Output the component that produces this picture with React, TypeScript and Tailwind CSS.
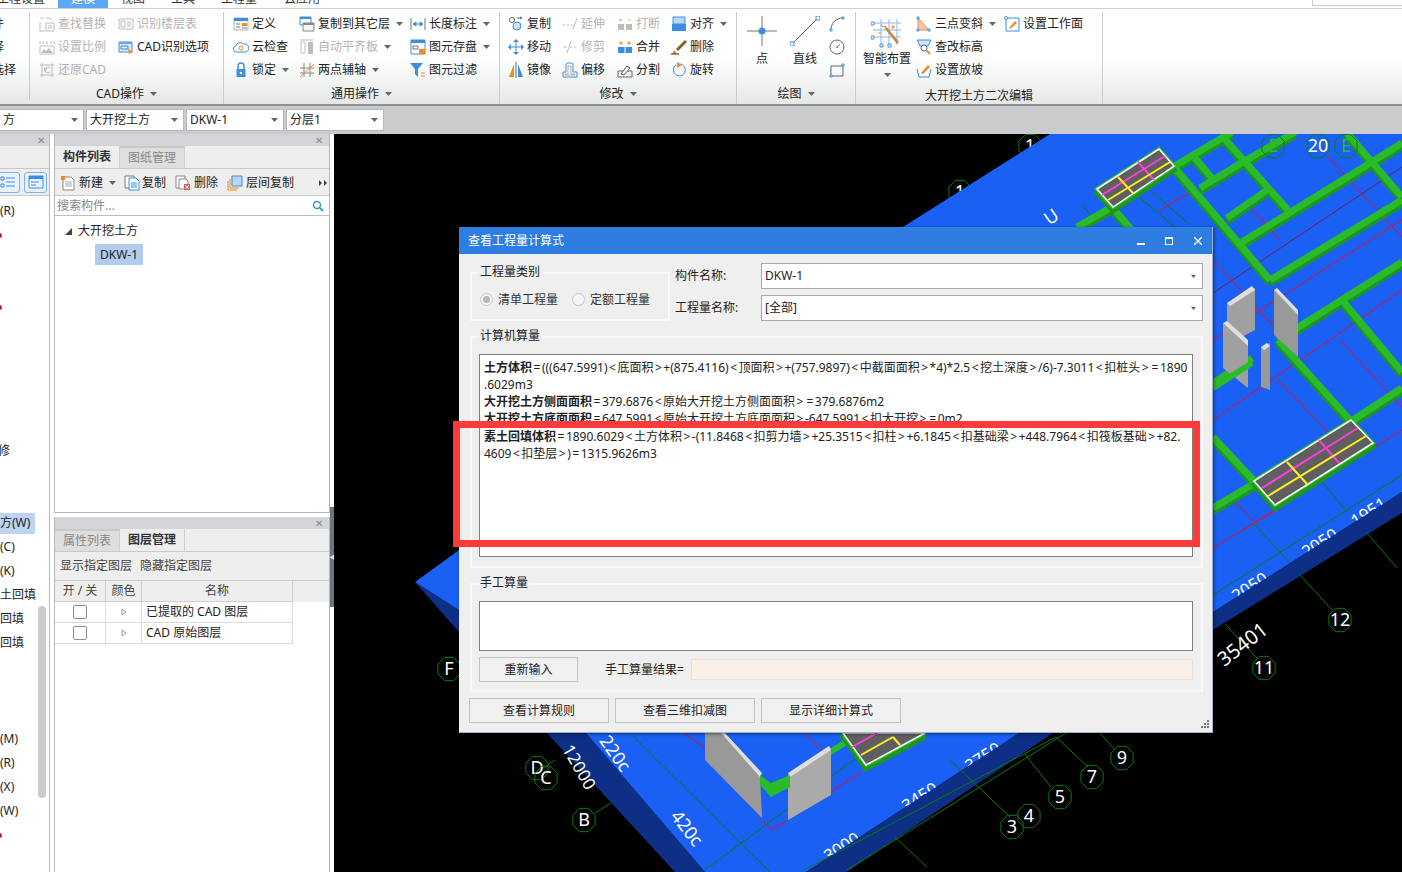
import type { ReactNode } from "react";

const BLUE = "#3d8ee0";
const ORANGE = "#f08a24";
const DIS = "#bdbdbd";

function Ico({ children }: { children: ReactNode }) {
  return (
    <svg viewBox="0 0 16 16" className="h-4 w-4 shrink-0" fill="none" strokeWidth="1">
      {children}
    </svg>
  );
}

const icons: Record<string, ReactNode> = {
  find: <Ico><path d="M1 2h4M7 2h3l3 2M7 7h8v8H7zM9 10h4M9 12h4M1 6v9h5" stroke={DIS} /></Ico>,
  floor: <Ico><path d="M1 3h14v10H1z" stroke={DIS} /><path d="M3 5h4v6H3zM9 6h4M9 8h4M9 10h4" stroke={DIS} /></Ico>,
  scale: <Ico><path d="M1 2v3M4 2v3M8 2v3M12 2v3M15 2v3M1 7h14v8H1z" stroke={DIS} /><path d="M2 14l3-4 2 2 3-3 4 5z" fill={DIS} /></Ico>,
  cadopt: <Ico><path d="M1 3h13v10H1z" fill="#dce9f8" stroke={BLUE} /><path d="M1 3h13v2H1z" fill="#6aa7e8" /><path d="M3 7h7v3H3z" stroke={BLUE} /><path d="M10 9l5 5-3 0-1 2z" fill={ORANGE} /></Ico>,
  restore: <Ico><path d="M3 1v14M1 3h14M13 1v14M1 13h14" stroke={DIS} /><path d="M11 6a3 3 0 1 0 0 4M5 6l3 1-2 2z" stroke={DIS} /></Ico>,
  define: <Ico><path d="M1 2h14v12H1z" fill="#f6f6f6" stroke="#b5b5b5" /><path d="M1 2h14v3H1z" fill={BLUE} /><path d="M9 7h5v3H9z" fill={ORANGE} /><path d="M3 8h4M3 11h4M9 12h5" stroke="#888" /></Ico>,
  copyfloor: <Ico><path d="M1 1h11v8H1z" fill="#fff" stroke={BLUE} /><path d="M1 1h11v2H1z" fill={BLUE} /><path d="M4 7h11v8H4z" fill="#f4f4f4" stroke="#888" /><path d="M4 7h11v2H4z" fill="#888" /></Ico>,
  measure: <Ico><path d="M1 2v12M15 2v12" stroke="#777" /><path d="M3 8h10M3 8l3-2v4zM13 8l-3-2v4z" stroke={BLUE} fill={BLUE} /></Ico>,
  cloud: <Ico><path d="M4 13a3 3 0 0 1-1-6 4 4 0 0 1 7-2 3.500 3.500 0 0 1 3 8z" fill="#fff" stroke={BLUE} /><circle cx="8" cy="9" r="2" stroke={ORANGE} /></Ico>,
  level: <Ico><path d="M1 1h14" stroke={DIS} /><path d="M2 3h4v11H2z" stroke={DIS} /><path d="M9 3h5v12H9z" fill={DIS} /></Ico>,
  save: <Ico><path d="M1 1h14v14H1z" fill="#fff" stroke={BLUE} /><path d="M1 1h14v3H1z" fill={BLUE} /><path d="M3 7h5v3H3z" stroke="#777" /><path d="M9 10h6v5H9z" fill={ORANGE} /></Ico>,
  lock: <Ico><path d="M5 7V4a3 3 0 0 1 6 0v3" stroke={BLUE} strokeWidth="1.500" /><path d="M3.500 7h9v8h-9z" fill={BLUE} /><circle cx="8" cy="11" r="1.300" fill="#fff" /></Ico>,
  axis: <Ico><path d="M5 1v14M11 1v14M1 6h14M1 11h14" stroke="#888" /><path d="M1 15L15 2" stroke={ORANGE} /></Ico>,
  filter: <Ico><path d="M0 1h13L8 7v8L5 12V7z" fill={BLUE} /><path d="M11 11h4M11 14h4" stroke={ORANGE} /></Ico>,
  copy: <Ico><circle cx="4" cy="4" r="2.500" stroke="#666" /><circle cx="9" cy="10" r="4" fill="#cfe3f8" stroke={BLUE} /><path d="M9 2h5l-2-1M14 2l-2 1" stroke="#666" /></Ico>,
  extend: <Ico><path d="M1 9h2M5 9h2M9 9h2M11 13l4-11" stroke={DIS} /></Ico>,
  move: <Ico><path d="M8 3v10M3 8h10" stroke={BLUE} /><path d="M8 0l3 3H5zM8 16l3-3H5zM0 8l3-3v6zM16 8l-3-3v6z" fill={BLUE} /></Ico>,
  trim: <Ico><path d="M1 8h4M8 8h2M12 8h2M5 14L9 2" stroke={DIS} /></Ico>,
  mirror: <Ico><path d="M6 2v13H1z" fill={ORANGE} /><path d="M10 2v13h5z" fill={BLUE} /><path d="M8 0v16" stroke="#666" /></Ico>,
  offset: <Ico><path d="M1 15V10h3V3a2 2 0 0 1 2-2h3a2 2 0 0 1 2 2v7h4v5z" fill="#fff" stroke={BLUE} /><path d="M3 13v-1h3V4h3v8h4v1z" stroke="#aaa" /></Ico>,
  break: <Ico><path d="M1 8h6v6H1zM9 8h6v6H9z" fill={DIS} /><path d="M2 3l3 2M2 5l3-2M11 3l3 2" stroke={DIS} /></Ico>,
  merge: <Ico><path d="M1 8h14v6H1z" fill={BLUE} /><path d="M8 8v6" stroke="#fff" /><path d="M4 2v4M2 4h4M12 2v4M10 4h4" stroke={ORANGE} /></Ico>,
  split: <Ico><path d="M1 9h14v6H1z" stroke="#666" /><path d="M4 12l6-8 3 2-6 7z" fill="#fff" stroke="#555" /><path d="M2 15h3" stroke={ORANGE} /></Ico>,
  align: <Ico><path d="M2 1h12v7H2z" fill="#bcd6f2" stroke={BLUE} /><path d="M1 8h14v7H1z" fill={BLUE} /></Ico>,
  del: <Ico><path d="M5 10L14 1l2 2-9 9z" fill="#8b5a2b" /><path d="M3 11l3 3-2 1H1z" fill={ORANGE} /><path d="M0 15h8" stroke="#333" /></Ico>,
  rotate: <Ico><path d="M5 3a6 6 0 1 0 4-1" stroke={BLUE} /><path d="M6 0l5 3-5 3z" fill={ORANGE} /></Ico>,
  slope: <Ico><path d="M2 2v12h11z" fill="#f5c9a6" stroke="#e09060" /><path d="M1 1h2v2H1zM1 13h2v2H1zM12 13h2v2h-2z" fill="#fff" stroke={BLUE} /></Ico>,
  elev: <Ico><path d="M1 1h14l-3 6H4z" fill="#cfe3f8" stroke={BLUE} /><circle cx="8" cy="9" r="3" fill="#fff" stroke="#3a6ea5" /><path d="M10 11l4 4" stroke={ORANGE} strokeWidth="2" /></Ico>,
  slopeset: <Ico><path d="M1 7l2 8h10l2-8" stroke={BLUE} /><path d="M5 11l7-8 2 2-7 7z" fill={ORANGE} /></Ico>,
  plane: <Ico><path d="M2 2h13v13H2z" fill="#fff" stroke={BLUE} /><circle cx="2" cy="2" r="1.500" fill="#fff" stroke={BLUE} /><path d="M5 12l6-7 2 2-7 6z" fill={ORANGE} /></Ico>,
  nnew: <Ico><path d="M3 2h8l3 3v10H3z" fill="#fff" stroke="#888" /><path d="M5 7h7M5 9h7M5 11h7" stroke="#aaa" /><path d="M1 1h4v4H1z" fill={ORANGE} /></Ico>,
  ncopy: <Ico><path d="M1 1h9v12H1z" fill="#fff" stroke="#777" /><path d="M5 3h7l3 3v9H5z" fill="#fff" stroke={BLUE} /><path d="M7 8h6M7 10h6M7 12h6" stroke={BLUE} /></Ico>,
  ndel: <Ico><path d="M1 1h9v12H1z" fill="#fff" stroke="#888" /><path d="M4 4h7l2 2v8H4z" fill="#fff" stroke="#888" /><path d="M9 9h6v6H9z" fill="#e25555" /><path d="M10 10l4 4M14 10l-4 4" stroke="#fff" /></Ico>,
  nfloor: <Ico><path d="M5 1h10v10H5z" fill="#b9d6f6" stroke={BLUE} /><path d="M3 4v9h9M1 6v9h9" stroke={ORANGE} /></Ico>,
};

function Caret() {
  return (
    <svg viewBox="0 0 7 4" className="h-1 w-[7px] shrink-0">
      <path d="M0 0h7L3.500 4z" fill="#666" />
    </svg>
  );
}

function Item({ icon, label, off, caret }: { icon: string; label: string; off?: boolean; caret?: boolean }) {
  return (
    <div className={`flex h-[23px] items-center gap-[3px] whitespace-nowrap ${off ? "text-[#b3b3b3]" : "text-[#222]"}`}>
      {icons[icon]}
      <span>{label}</span>
      {caret && <span className="ml-[3px]"><Caret /></span>}
    </div>
  );
}

function Group({ width, children, footer, caret = true, pl }: { width: string; children: ReactNode; footer: string; caret?: boolean; pl: string }) {
  return (
    <div className={`flex shrink-0 flex-col border-r border-[#c9cccc] ${width}`}>
      <div className={`flex h-[69px] ${pl}`}>{children}</div>
      <div className={`flex h-[24px] items-center justify-center gap-[6px] text-[#222] ${caret ? "pt-[2px]" : "pt-[6px]"}`}>
        <span>{footer}</span>
        {caret && <Caret />}
      </div>
    </div>
  );
}

function Ribbon() {
  return (
    <div className="flex h-[97px] shrink-0 border-b-2 border-[#8e9092] bg-gradient-to-b from-white from-50% to-[#e6e8e8] pt-[3px] text-xs">
      <div className="flex h-[88px] w-[30px] shrink-0 flex-col border-r border-[#c9cccc] text-[#222]">
        <div className="flex h-[23px] items-center justify-start overflow-hidden"><span className="-ml-[8px]">件</span></div>
        <div className="flex h-[23px] items-center overflow-hidden"><span className="-ml-[8px]">择</span></div>
        <div className="flex h-[23px] items-center overflow-hidden"><span className="-ml-[8px]">选择</span></div>
      </div>
      <Group width="w-[194px]" pl="pl-[9px]" footer="CAD操作">
        <div className="w-[79px]">
          <Item icon="find" label="查找替换" off />
          <Item icon="scale" label="设置比例" off />
          <Item icon="restore" label="还原CAD" off />
        </div>
        <div>
          <Item icon="floor" label="识别楼层表" off />
          <Item icon="cadopt" label="CAD识别选项" />
        </div>
      </Group>
      <Group width="w-[276px]" pl="pl-[9px]" footer="通用操作">
        <div className="w-[66px]">
          <Item icon="define" label="定义" />
          <Item icon="cloud" label="云检查" />
          <Item icon="lock" label="锁定" caret />
        </div>
        <div className="w-[111px]">
          <Item icon="copyfloor" label="复制到其它层" caret />
          <Item icon="level" label="自动平齐板" off caret />
          <Item icon="axis" label="两点辅轴" caret />
        </div>
        <div>
          <Item icon="measure" label="长度标注" caret />
          <Item icon="save" label="图元存盘" caret />
          <Item icon="filter" label="图元过滤" />
        </div>
      </Group>
      <Group width="w-[237px]" pl="pl-[8px]" footer="修改">
        <div className="w-[54px]">
          <Item icon="copy" label="复制" />
          <Item icon="move" label="移动" />
          <Item icon="mirror" label="镜像" />
        </div>
        <div className="w-[55px]">
          <Item icon="extend" label="延伸" off />
          <Item icon="trim" label="修剪" off />
          <Item icon="offset" label="偏移" />
        </div>
        <div className="w-[54px]">
          <Item icon="break" label="打断" off />
          <Item icon="merge" label="合并" />
          <Item icon="split" label="分割" />
        </div>
        <div>
          <Item icon="align" label="对齐" caret />
          <Item icon="del" label="删除" />
          <Item icon="rotate" label="旋转" />
        </div>
      </Group>
      <Group width="w-[119px]" pl="pl-[10px]" footer="绘图">
        <div className="flex w-[30px] flex-col items-center pt-[4px] text-[#222]">
          <svg viewBox="0 0 30 30" className="h-[30px] w-[30px]">
            <path d="M15 0v30M0 15h30" stroke="#777" />
            <circle cx="15" cy="15" r="3.500" fill={BLUE} />
          </svg>
          <span className="mt-[5px]">点</span>
        </div>
        <div className="ml-[13px] flex w-[30px] flex-col items-center pt-[4px] text-[#222]">
          <svg viewBox="0 0 30 30" className="h-[30px] w-[30px]">
            <path d="M2 28L28 2" stroke="#666" />
            <path d="M0 26h4v4H0zM26 0h4v4h-4z" fill="#fff" stroke={BLUE} />
          </svg>
          <span className="mt-[5px] whitespace-nowrap">直线</span>
        </div>
        <div className="ml-[9px] flex w-[17px] flex-col">
          <div className="flex h-[23px] items-center"><svg viewBox="0 0 16 16" className="h-4 w-4" fill="none"><path d="M2 14C2 7 7 2 14 2" stroke="#666" /><path d="M1 13h2v2H1zM13 1h2v2h-2z" fill="#fff" stroke={BLUE} /></svg></div>
          <div className="flex h-[23px] items-center"><svg viewBox="0 0 16 16" className="h-4 w-4" fill="none"><circle cx="8" cy="8" r="7" stroke="#666" /><path d="M8 8l3-3" stroke={BLUE} /><circle cx="8" cy="8" r="1" fill={BLUE} /></svg></div>
          <div className="flex h-[23px] items-center"><svg viewBox="0 0 16 16" className="h-4 w-4" fill="none"><path d="M2 4h12v10H2z" stroke="#666" /><path d="M13 2h2v2h-2zM1 13h2v2H1z" fill="#fff" stroke={BLUE} /></svg></div>
        </div>
      </Group>
      <Group width="w-[247px]" pl="pl-[7px]" footer="大开挖土方二次编辑" caret={false}>
        <div className="flex w-[48px] flex-col items-center text-[#222]">
          <svg viewBox="0 0 32 30" className="mt-[6px] h-[30px] w-[32px]" fill="none">
            <path d="M2 5h28M2 12h28M2 19h28M10 1v26M18 1v26M26 1v26" stroke="#8ab8ea" />
            <path d="M14 11l12 15 2-2L16 9z" fill="#c98a4a" />
            <path d="M10 6l2 3 3-1-1 3M20 9h4M22 7v4M7 15h3" stroke={ORANGE} />
            <path d="M0 4h3v3H0zM0 18h3v3H0zM9 26h3v3H9zM17 26h3v3h-3z" fill="#fff" stroke={BLUE} />
          </svg>
          <span className="mt-[3px] whitespace-nowrap">智能布置</span>
          <span className="mt-[6px]"><Caret /></span>
        </div>
        <div className="ml-[5px] w-[88px]">
          <Item icon="slope" label="三点变斜" caret />
          <Item icon="elev" label="查改标高" />
          <Item icon="slopeset" label="设置放坡" />
        </div>
        <div>
          <Item icon="plane" label="设置工作面" />
        </div>
      </Group>
    </div>
  );
}

function Combo({ width, label }: { width: string; label: string }) {
  return (
    <div className={`flex h-[22px] items-center justify-between border border-[#b9b9b9] bg-white pl-[3px] pr-[5px] text-xs text-[#222] ${width}`}>
      <span>{label}</span>
      <Caret />
    </div>
  );
}

const sideRows = ["(R)", "•", "", "", "•", "", "", "", "", "", "修", "", "", "方(W)", "(C)", "(K)", "土回填", "回填", "回填", "", "", "", "(M)", "(R)", "(X)", "(W)", "•", ""];

function LeftPanel() {
  return (
    <div className="relative flex w-[50px] shrink-0 flex-col border-r border-[#b5b7b9] bg-white text-xs text-[#222]">
      <div className="flex h-[12px] items-center justify-end bg-[#d3d5da] pr-[4px] text-[10px] leading-none text-[#888]">✕</div>
      <div className="h-[23px] border-b border-[#c9c9c9] bg-[#eeeeee]" />
      <div className="flex h-[27px] items-center gap-[4px] border-b border-[#c9c9c9] bg-[#eeeeee] pl-0">
        <div className="-ml-[4px] flex h-[21px] w-[24px] items-center justify-center rounded-[3px] border border-[#78b2f2] bg-[#eaf3fd]">
          <svg viewBox="0 0 16 12" className="h-3 w-4" fill="none"><path d="M1 1h3v3H1zM1 8h3v3H1zM6 2h9M6 6h9M6 10h9" stroke={BLUE} /></svg>
        </div>
        <div className="flex h-[21px] w-[23px] items-center justify-center rounded-[3px] border border-[#78b2f2] bg-[#eaf3fd]">
          <svg viewBox="0 0 16 14" className="h-[14px] w-4" fill="none"><path d="M1 1h14v12H1z" stroke={BLUE} /><path d="M1 1h14v3H1z" fill={BLUE} /><path d="M3 7h8M3 10h5" stroke={BLUE} /></svg>
        </div>
      </div>
      <div className="flex flex-col pt-[3px]">
        {sideRows.map((text, i) => (
          <div key={i} className="flex h-[24px] items-center overflow-hidden whitespace-nowrap">
            {text === "•" ? (
              <span className="-ml-[3px] h-[5px] w-[5px] rounded-full bg-[#c0124a]" />
            ) : (
              <span className={`flex h-[21px] items-center ${text === "方(W)" ? "w-[35px] bg-[#bcd4f0]" : ""} ${text === "修" ? "-ml-[2px]" : ""}`}>{text}</span>
            )}
          </div>
        ))}
      </div>
      <div className="absolute left-[38px] top-[472px] h-[192px] w-[8px] rounded bg-[#cccccc]" />
    </div>
  );
}

function Tabs({ items, active }: { items: string[]; active: number }) {
  return (
    <div className="flex h-[23px] border-b border-[#c9c9c9] bg-[#eeeeee] text-xs">
      {items.map((t, i) => (
        <div
          key={t}
          className={`flex w-[65px] items-center justify-center border-r border-[#cfcfcf] ${
            i === active ? "bg-[#eeeeee] font-bold text-[#333]" : "border-t-2 border-t-[#c9c9c9] bg-[#dedede] text-[#888]"
          }`}
        >
          {t}
        </div>
      ))}
    </div>
  );
}

function PanelHeader() {
  return <div className="flex h-[12px] shrink-0 items-center justify-end bg-[#d3d5da] pr-[6px] text-[10px] leading-none text-[#888]">✕</div>;
}

function MidPanel() {
  return (
    <div className="flex w-[276px] shrink-0 flex-col text-xs text-[#222]">
      <div className="flex h-[379px] flex-col border-x border-b border-[#b5b7b9] bg-white">
        <PanelHeader />
        <Tabs items={["构件列表", "图纸管理"]} active={0} />
        <div className="flex h-[27px] items-center border-b border-[#c9c9c9] bg-[#eeeeee] pl-[5px] pt-[1px]">
          <div className="flex w-[64px] items-center gap-[3px]">{icons.nnew}<span>新建</span><span className="ml-[3px]"><Caret /></span></div>
          <div className="flex w-[51px] items-center gap-[2px]">{icons.ncopy}<span>复制</span></div>
          <div className="flex w-[52px] items-center gap-[3px]">{icons.ndel}<span>删除</span></div>
          <div className="flex items-center gap-[3px]">{icons.nfloor}<span>层间复制</span></div>
          <svg viewBox="0 0 8 6" className="ml-auto mr-[2px] h-[6px] w-2"><path d="M0 0l3 3-3 3zM5 0l3 3-3 3z" fill="#444" /></svg>
        </div>
        <div className="flex h-[20px] items-center justify-between border-b border-[#b9bcc2] pl-[2px] pr-[5px] text-[#888]">
          <span>搜索构件...</span>
          <svg viewBox="0 0 12 12" className="h-3 w-3" fill="none"><circle cx="5" cy="5" r="3.500" stroke="#3a94c8" strokeWidth="1.500" /><path d="M8 8l3 3" stroke="#3a94c8" strokeWidth="2" /></svg>
        </div>
        <div className="flex h-[24px] items-end gap-[6px] pl-[10px]">
          <svg viewBox="0 0 7 7" className="mb-[5px] h-[7px] w-[7px]"><path d="M7 0v7H0z" fill="#444" /></svg>
          <span className="pb-[1px]">大开挖土方</span>
        </div>
        <div className="pl-[40px] pt-[4px]">
          <span className="flex h-[21px] w-[48px] items-center justify-center bg-[#b2cced]">DKW-1</span>
        </div>
      </div>
      <div className="h-[4px] bg-white" />
      <div className="flex flex-1 flex-col border-x border-[#b5b7b9] bg-white">
        <PanelHeader />
        <Tabs items={["属性列表", "图层管理"]} active={1} />
        <div className="flex h-[29px] items-center gap-[8px] border-b border-[#c9c9c9] bg-[#eeeeee] pl-[5px] text-[#444]">
          <span>显示指定图层</span>
          <span>隐藏指定图层</span>
        </div>
        <div className="flex h-[21px] bg-[#eeeeee] text-[#444]">
          <div className="flex w-[51px] items-center justify-center border-r border-b border-[#cfcfcf]">开 / 关</div>
          <div className="flex w-[36px] items-center justify-center border-r border-b border-[#cfcfcf]">颜色</div>
          <div className="flex w-[151px] items-center justify-center border-r border-b border-[#cfcfcf]">名称</div>
        </div>
        {["已提取的 CAD 图层", "CAD 原始图层"].map((name) => (
          <div key={name} className="flex h-[21px]">
            <div className="flex w-[51px] items-center justify-center border-r border-b border-[#dcdcdc]">
              <span className="h-[14px] w-[14px] rounded-[2px] border border-[#8f8f8f]" />
            </div>
            <div className="flex w-[36px] items-center justify-center border-r border-b border-[#dcdcdc]">
              <svg viewBox="0 0 6 8" className="h-2 w-[6px]" fill="none"><path d="M1 1l4 3-4 3z" stroke="#999" /></svg>
            </div>
            <div className="flex w-[151px] items-center border-r border-b border-[#dcdcdc] pl-[4px]">{name}</div>
          </div>
        ))}
      </div>
    </div>
  );
}

function Bubble({ x, y, t, r = 12, color = "#fff" }: { x: number; y: number; t: string; r?: number; color?: string }) {
  const pts = Array.from({ length: 8 }, (_, i) => {
    const a = (Math.PI / 4) * i + Math.PI / 8;
    return `${x + r * Math.cos(a)},${y + r * 1.05 * Math.sin(a)}`;
  }).join(" ");
  return (
    <g>
      <polygon points={pts} fill="none" stroke="#0c7a0c" />
      <text x={x} y={y + 6} fontSize="18" fill={color} textAnchor="middle">{t}</text>
    </g>
  );
}

const beams = [
  [1077, 227, 1112, 207], [1112, 207, 1132, 230], [1173, 167, 1232, 132], [1175, 168, 1270, 280],
  [1270, 280, 1402, 200], [1223, 137, 1288, 210], [1200, 188, 1243, 162], [1243, 162, 1295, 132],
  [1227, 218, 1267, 190], [1242, 242, 1367, 165], [1367, 165, 1402, 143], [1347, 133, 1402, 197],
  [1195, 158, 1212, 178], [1213, 383, 1252, 358], [1278, 340, 1402, 262], [1278, 340, 1350, 420],
  [1342, 300, 1402, 372], [1353, 420, 1402, 388], [1213, 508, 1255, 483], [1213, 437, 1255, 482],
];

const reds = [
  [1213, 340, 1402, 220], [1213, 420, 1402, 290], [1243, 530, 1402, 430], [1250, 162, 1293, 134],
  [1213, 260, 1277, 330], [1278, 380, 1333, 437], [1340, 340, 1402, 407], [1328, 157, 1402, 237],
  [1250, 207, 1280, 240], [1213, 548, 1273, 512], [1227, 493, 1255, 523], [1160, 210, 1213, 180],
  [684, 733, 705, 748], [804, 733, 831, 760], [760, 818, 771, 830], [771, 830, 788, 820], [831, 792, 861, 772],
];

const axes = [
  [1213, 595, 1402, 475], [1225, 624, 1257, 658], [1300, 575, 1332, 610], [1367, 533, 1397, 568],
  [1253, 523, 1290, 563], [1323, 483, 1347, 512], [595, 813, 611, 803], [632, 735, 770, 872],
  [804, 870, 1056, 737], [895, 837, 927, 867], [950, 760, 1010, 817], [1024, 753, 1051, 787],
  [1056, 737, 1088, 767], [1100, 733, 1115, 750], [847, 870, 1213, 641], [705, 870, 890, 733],
  [1150, 190, 1190, 225], [1140, 198, 1175, 227], [1082, 205, 1095, 220], [555, 760, 540, 770],
];

function Pad({ p, m, y, mc, yc }: { p: string; m: number[]; y: number[]; mc: number[]; yc: number[] }) {
  return (
    <g>
      <polygon points={p} fill="#1f941f" stroke="#1f941f" strokeWidth="5" transform="translate(0 4)" />
      <polygon points={p} fill="#5f5f5f" stroke="#2abb2a" strokeWidth="4" />
      <polygon points={p} fill="#5f5f5f" stroke="#fff" strokeWidth="1.500" />
      <path d={`M${m[0]} ${m[1]}L${m[2]} ${m[3]}M${mc[0]} ${mc[1]}L${mc[2]} ${mc[3]}`} stroke="#ff3de0" strokeWidth="2" />
      <path d={`M${y[0]} ${y[1]}L${y[2]} ${y[3]}M${yc[0]} ${yc[1]}L${yc[2]} ${yc[3]}`} stroke="#ffee22" strokeWidth="2" />
    </g>
  );
}

function Scene() {
  return (
    <svg viewBox="334 134 1068 738" className="absolute inset-0 h-full w-full">
      <rect x="334" y="134" width="1068" height="738" fill="#000" />
      <Bubble x={1030} y={146} t="1" />
      <Bubble x={960} y={192} t="1" />
      <Bubble x={1400} y={578} t="1" />
      <polygon points="415,582 459,632 547,733 675,872 847,872 1053,733 1213,630 1402,513 1402,492 1019,733 806,872 705,872 586,733 459,610" fill="#0d3086" />
      <polygon points="415,582 903,227 1050,134 1402,134 1402,492 1213,612 1019,733 806,872 705,872 586,733 459,610" fill="#1a60f5" />
      {[
        [1253, 592, "2050"], [1323, 548, "2050"], [1372, 517, "1951"], [845, 852, "3000"], [923, 802, "3450"], [986, 762, "3750"],
      ].map(([x, y, t]) => (
        <text key={String(t) + x} x={Number(x)} y={Number(y)} fontSize="17" fill="#fff" textAnchor="middle" transform={`rotate(-33 ${x} ${y})`}>{t}</text>
      ))}
      <polygon points="1402,492 1213,612 1019,733 806,872 847,872 1053,733 1213,630 1402,513" fill="#0d3086" />
      <polygon points="1402,513 1213,630 1053,733 847,872 1402,872" fill="#000" />
      <text x={1055} y={222} fontSize="18" fill="#fff" textAnchor="middle" transform="rotate(-35 1055 222)">U</text>
      <text x={610} y={757} fontSize="18" fill="#fff" textAnchor="middle" transform="rotate(55 610 757)">220c</text>
      <text x={682} y={832} fontSize="18" fill="#fff" textAnchor="middle" transform="rotate(52 682 832)">420c</text>
      <text x={574} y={770} fontSize="17" fill="#fff" textAnchor="middle" transform="rotate(60 574 770)">12000</text>
      {reds.map((l, i) => (
        <line key={i} x1={l[0]} y1={l[1]} x2={l[2]} y2={l[3]} stroke="#e8102a" />
      ))}
      <line x1="1213" y1="293" x2="1402" y2="167" stroke="#7a1a4a" />
      {axes.map((l, i) => (
        <line key={i} x1={l[0]} y1={l[1]} x2={l[2]} y2={l[3]} stroke="#0c7a0c" />
      ))}
      {beams.map((b, i) => (
        <line key={i} x1={b[0]} y1={b[1] + 3} x2={b[2]} y2={b[3] + 3} stroke="#1f941f" strokeWidth="8" />
      ))}
      {beams.map((b, i) => (
        <line key={i} x1={b[0]} y1={b[1]} x2={b[2]} y2={b[3]} stroke="#2abb2a" strokeWidth="7" />
      ))}
      <Pad p="1097,189 1159,149 1174,166 1113,207" m={[1102, 195, 1165, 156]} y={[1108, 200, 1170, 162]} mc={[1138, 162, 1154, 180]} yc={[1118, 177, 1133, 193]} />
      <Pad p="1254,481 1351,420 1373,443 1275,505" m={[1262, 488, 1358, 428]} y={[1268, 496, 1366, 436]} mc={[1319, 440, 1339, 463]} yc={[1287, 462, 1307, 484]} />
      <polygon points="1227,303 1255,288 1255,330 1227,345" fill="#a0a0a0" />
      <polygon points="1227,303 1252,286 1255,290 1230,306" fill="#dedede" />
      <polygon points="1274,290 1298,313 1298,357 1274,335" fill="#999" />
      <polygon points="1274,290 1277,288 1298,310 1298,315" fill="#dedede" />
      <polygon points="1223,323 1248,343 1248,388 1223,368" fill="#a0a0a0" />
      <polygon points="1223,323 1227,321 1248,340 1248,346" fill="#dedede" />
      <polygon points="1261,347 1270,343 1270,390 1261,387" fill="#999" />
      <polygon points="1261,347 1267,343 1270,346 1264,350" fill="#dedede" />
      <line x1="1213" y1="388" x2="1252" y2="363" stroke="#2abb2a" strokeWidth="6" />
      <polygon points="705,733 721,733 760,775 762,818 705,760" fill="#999" />
      <polygon points="721,733 725,733 762,773 760,777" fill="#dedede" />
      <polygon points="788,775 831,748 831,795 788,820" fill="#aaa" />
      <polygon points="788,773 829,746 831,750 790,777" fill="#dedede" />
      <polygon points="760,775 771,783 790,775 790,787 771,797 760,785" fill="#2abb2a" />
      <polygon points="831,748 847,738 847,745 831,755" fill="#2abb2a" />
      <Pad p="843,733 925,733 866,765" m={[852, 747, 877, 733]} y={[861, 755, 893, 737]} mc={[893, 737, 893, 737]} yc={[893, 737, 900, 745]} />
      <Bubble x={449} y={669} t="F" />
      <Bubble x={537} y={768} t="D" />
      <Bubble x={546} y={778} t="C" />
      <Bubble x={584} y={820} t="B" />
      <Bubble x={1012} y={827} t="3" />
      <Bubble x={1029} y={816} t="4" />
      <Bubble x={1060} y={797} t="5" />
      <Bubble x={1092} y={777} t="7" />
      <Bubble x={1122} y={758} t="9" />
      <Bubble x={1264} y={668} t="11" />
      <Bubble x={1340} y={620} t="12" />
      <Bubble x={1273} y={146} t="E" color="#2abb2a" />
      <Bubble x={1318} y={146} t="20" />
      <Bubble x={1346} y={146} t="E" color="#2abb2a" />
      <text x={1243} y={651} fontSize="20" fill="#fff" textAnchor="middle" transform="rotate(-38 1243 645)">35401</text>
    </svg>
  );
}

function GroupBox({ label, className, children }: { label: string; className: string; children: ReactNode }) {
  return (
    <div className={`relative border-2 border-[#f8f8f8] ${className}`}>
      <span className="absolute -top-[10px] left-[7px] bg-[#efefef] px-px text-xs leading-[16px] text-[#222]">{label}</span>
      {children}
    </div>
  );
}

function Select({ label, value }: { label: string; value: string }) {
  return (
    <div className="flex h-[26px] items-center">
      <span className="w-[86px] text-[#222]">{label}</span>
      <div className="flex h-[26px] flex-1 items-center justify-between border border-[#a8a8a8] bg-white pl-[3px] pr-[6px]">
        <span>{value}</span>
        <svg viewBox="0 0 5 3" className="h-[3px] w-[5px]"><path d="M0 0h5L2.500 3z" fill="#666" /></svg>
      </div>
    </div>
  );
}

function Btn({ label, width }: { label: string; width: string }) {
  return (
    <button className={`flex h-[25px] items-center justify-center border border-[#c3c3c3] bg-[#f0f0f0] text-xs text-[#222] ${width}`}>{label}</button>
  );
}

// the original widens < > = with side bearings
function Calc({ text }: { text: string }) {
  return (
    <>
      {text.split(/([<>=])/).map((part, i) =>
        /^[<>=]$/.test(part) ? (
          <span key={i} className="px-[1.5px]">{part}</span>
        ) : (
          <span key={i}>{part}</span>
        ),
      )}
    </>
  );
}

function Dialog() {
  return (
    <div className="absolute left-[125px] top-[93px] flex h-[506px] w-[754px] flex-col border-b border-r border-[#9fb4cc] bg-[#efefef] text-xs text-[#222] shadow-[1px_1px_3px_rgba(0,0,0,0.5)]">
      <div className="flex h-[27px] shrink-0 items-center justify-between bg-[#2e7de1] pl-[9px] pr-[10px] text-white">
        <span>查看工程量计算式</span>
        <div className="flex items-center">
          <span className="mt-[6px] h-[2px] w-[8px] bg-white" />
          <span className="ml-[20px] h-[8px] w-[8px] border border-t-2 border-white" />
          <svg viewBox="0 0 8 8" className="ml-[21px] h-2 w-2" fill="none"><path d="M0 0l8 8M8 0L0 8" stroke="#fff" strokeWidth="1.300" /></svg>
        </div>
      </div>
      <div className="flex flex-1 flex-col pl-[11px] pr-[9px]">
        <div className="mt-[9px] flex h-[58px] gap-[5px]">
          <GroupBox label="工程量类别" className="mt-[9px] h-[49px] w-[200px] shrink-0">
            <div className="flex h-full items-center gap-[14px] pl-[8px] pt-[6px] text-[#333]">
              <div className="flex items-center gap-[5px]">
                <span className="flex h-[13px] w-[13px] items-center justify-center rounded-full border border-[#c9c9c9] bg-[#f5f5f5]">
                  <span className="h-[7px] w-[7px] rounded-full bg-[#b5b5b5]" />
                </span>
                <span>清单工程量</span>
              </div>
              <div className="flex items-center gap-[5px]">
                <span className="h-[13px] w-[13px] rounded-full border border-[#b5c7e0] bg-[#f5f5f5]" />
                <span>定额工程量</span>
              </div>
            </div>
          </GroupBox>
          <div className="flex flex-1 flex-col gap-[6px]">
            <Select label="构件名称:" value="DKW-1" />
            <Select label="工程量名称:" value="[全部]" />
          </div>
        </div>
        <GroupBox label="计算机算量" className="mt-[15px] flex h-[232px] flex-col pb-[9px] pl-[7px] pr-[8px] pt-[16px]">
          <div className="flex-1 overflow-hidden whitespace-nowrap border border-[#7f7f7f] bg-white pl-[4px] pt-[4px] leading-[17px] text-[#222]">
            <div><b>土方体积</b><Calc text="=(((647.5991)<底面积>+(875.4116)<顶面积>+(757.9897)<中截面面积>*4)*2.5<挖土深度>/6)-7.3011<扣桩头>=1890" /></div>
            <div>.6029m3</div>
            <div><b>大开挖土方侧面面积</b><Calc text="=379.6876<原始大开挖土方侧面面积>=379.6876m2" /></div>
            <div><b>大开挖土方底面面积</b><Calc text="=647.5991<原始大开挖土方底面面积>-647.5991<扣大开挖>=0m2" /></div>
            <div className="mt-px"><b>素土回填体积</b><Calc text="=1890.6029<土方体积>-(11.8468<扣剪力墙>+25.3515<扣柱>+6.1845<扣基础梁>+448.7964<扣筏板基础>+82." /></div>
            <div><Calc text="4609<扣垫层>)=1315.9626m3" /></div>
          </div>
        </GroupBox>
        <GroupBox label="手工算量" className="mt-[15px] flex h-[109px] flex-col px-[7px] pr-[8px] pt-[16px]">
          <div className="h-[50px] border border-[#7f7f7f] bg-white" />
          <div className="mt-[6px] flex items-center">
            <Btn label="重新输入" width="w-[99px]" />
            <span className="ml-[27px] w-[86px]">手工算量结果=</span>
            <div className="h-[21px] flex-1 border border-[#e6e2dc] bg-[#f8efe6]" />
          </div>
        </GroupBox>
        <div className="mt-[6px] -ml-px flex gap-[6px]">
          <Btn label="查看计算规则" width="w-[140px]" />
          <Btn label="查看三维扣减图" width="w-[140px]" />
          <Btn label="显示详细计算式" width="w-[140px]" />
        </div>
      </div>
      <svg viewBox="0 0 10 10" className="absolute bottom-[2px] right-[2px] h-[10px] w-[10px]">
        <path d="M7 0h2v2H7zM4 3h2v2H4zM7 3h2v2H7zM1 6h2v2H1zM4 6h2v2H4zM7 6h2v2H7z" fill="#777" />
      </svg>
      <div className="absolute left-[-6px] top-[194px] h-[126px] w-[747px] border-[7px] border-[#ff3a3a]" />
    </div>
  );
}

export default function App() {
  return (
    <div className="flex h-[872px] w-[1402px] flex-col overflow-hidden bg-white font-['Noto_Sans','Noto_Sans_CJK_SC',sans-serif] text-xs">
      <div className="flex h-[9px] shrink-0 overflow-hidden border-b border-[#d0d0d0] bg-white text-xs leading-[12px] text-[#333]">
        <span className="-mt-[7px] -ml-[3px] w-[61px]">工程设置</span>
        <span className="flex h-[9px] w-[50px] justify-center bg-[#5ba8f5] text-white"><span className="-mt-[7px]">建模</span></span>
        <span className="-mt-[7px] ml-[13px] w-[50px]">视图</span>
        <span className="-mt-[7px] w-[50px]">工具</span>
        <span className="-mt-[7px] w-[63px]">工程量</span>
        <span className="-mt-[7px] w-[50px]">云应用</span>
        <span className="ml-auto h-[6px] w-[90px] border-b border-l border-[#c9c9c9]" />
      </div>
      <Ribbon />
      <div className="flex h-[28px] shrink-0 items-center gap-[2px] bg-[#c9cbcd]">
        <Combo width="w-[85px] -ml-px" label="方" />
        <Combo width="w-[98px]" label="大开挖土方" />
        <Combo width="w-[98px]" label="DKW-1" />
        <Combo width="w-[98px]" label="分层1" />
      </div>
      <div className="flex flex-1 overflow-hidden">
        <LeftPanel />
        <div className="w-[4px] shrink-0 bg-white" />
        <MidPanel />
        <div className="flex w-[4px] shrink-0 items-center bg-white">
          <div className="mt-[108px] flex h-[100px] w-full items-center justify-center bg-[#6b7580] text-[6px] leading-none text-[#ddd]">◀</div>
        </div>
        <div className="relative flex-1">
          <Scene />
          <Dialog />
        </div>
      </div>
    </div>
  );
}
